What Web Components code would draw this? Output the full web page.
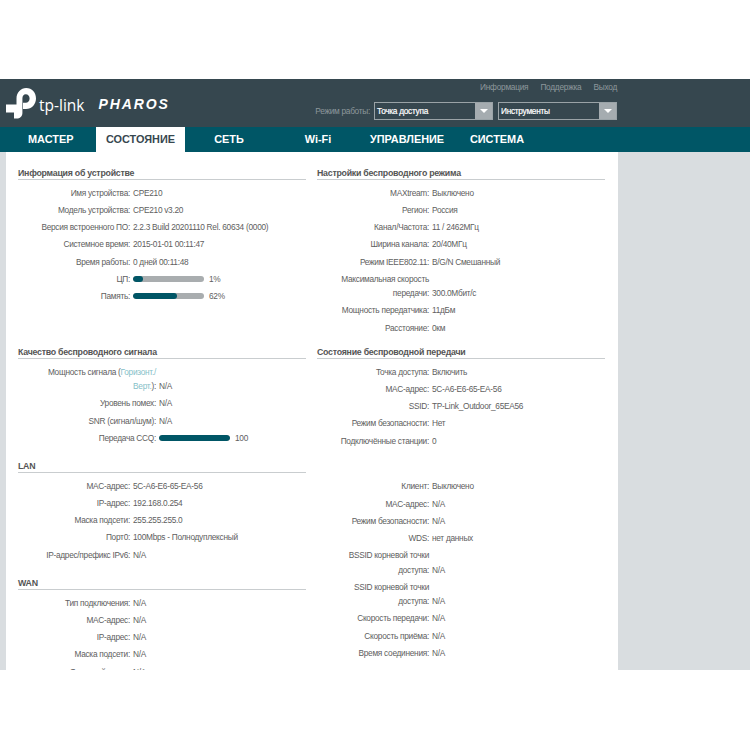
<!DOCTYPE html>
<html>
<head>
<meta charset="utf-8">
<title>CPE210</title>
<style>
html, body { margin: 0; padding: 0; background: #fff; }
body { font-family: "Liberation Sans", Arial, sans-serif; color: #555; padding-top: 79px; width: 750px; }
</style>
</head>
<body>
<router-page></router-page>

<template id="t-page">
  <style>
    :host { display: block; }
    .content { display: flex; height: 518px; overflow: hidden; background: #d9dde0; padding-left: 6px; }
    .panel { width: 612px; background: #fff; box-sizing: border-box; padding: 0 13px 0 12px; display: grid; grid-template-columns: 288px 288px; column-gap: 11px; align-content: start; height: 700px; }
    .col { display: flex; flex-direction: column; }
  </style>
  <top-header></top-header>
  <main-nav></main-nav>
  <div class="content">
    <div class="panel">
      <div class="col">
        <info-section heading="Информация об устройстве" style="height:179px">
          <info-row label="Имя устройства:">CPE210</info-row>
          <info-row label="Модель устройства:">CPE210 v3.20</info-row>
          <info-row label="Версия встроенного ПО:">2.2.3 Build 20201110 Rel. 60634 (0000)</info-row>
          <info-row label="Системное время:">2015-01-01 00:11:47</info-row>
          <info-row label="Время работы:">0 дней 00:11:48</info-row>
          <info-row label="ЦП:"><usage-bar value="14" text="1%"></usage-bar></info-row>
          <info-row label="Память:"><usage-bar value="62" text="62%"></usage-bar></info-row>
        </info-section>
        <info-section heading="Качество беспроводного сигнала" style="height:114px;--label-width:138px">
          <info-row label="Мощность сигнала (<a>Горизонт./</a><br><a>Верт.</a>):">N/A</info-row>
          <info-row label="Уровень помех:">N/A</info-row>
          <info-row label="SNR (сигнал/шум):">N/A</info-row>
          <info-row label="Передача CCQ:"><usage-bar value="100" text="100"></usage-bar></info-row>
        </info-section>
        <info-section heading="LAN" style="height:117px">
          <info-row label="MAC-адрес:">5C-A6-E6-65-EA-56</info-row>
          <info-row label="IP-адрес:">192.168.0.254</info-row>
          <info-row label="Маска подсети:">255.255.255.0</info-row>
          <info-row label="Порт0:">100Mbps - Полнодуплексный</info-row>
          <info-row label="IP-адрес/префикс IPv6:">N/A</info-row>
        </info-section>
        <info-section heading="WAN">
          <info-row label="Тип подключения:">N/A</info-row>
          <info-row label="MAC-адрес:">N/A</info-row>
          <info-row label="IP-адрес:">N/A</info-row>
          <info-row label="Маска подсети:">N/A</info-row>
          <info-row label="Основной шлюз:">N/A</info-row>
        </info-section>
      </div>
      <div class="col">
        <info-section heading="Настройки беспроводного режима" style="height:179px">
          <info-row label="MAXtream:">Выключено</info-row>
          <info-row label="Регион:">Россия</info-row>
          <info-row label="Канал/Частота:">11 / 2462МГц</info-row>
          <info-row label="Ширина канала:">20/40МГц</info-row>
          <info-row label="Режим IEEE802.11:">B/G/N Смешанный</info-row>
          <info-row label="Максимальная скорость<br>передачи:">300.0Мбит/с</info-row>
          <info-row label="Мощность передатчика:">11дБм</info-row>
          <info-row label="Расстояние:">0км</info-row>
        </info-section>
        <info-section heading="Состояние беспроводной передачи" style="height:114.5px">
          <info-row label="Точка доступа:">Включить</info-row>
          <info-row label="MAC-адрес:">5C-A6-E6-65-EA-56</info-row>
          <info-row label="SSID:">TP-Link_Outdoor_65EA56</info-row>
          <info-row label="Режим безопасности:">Нет</info-row>
          <info-row label="Подключённые станции:">0</info-row>
        </info-section>
        <info-section>
          <info-row label="Клиент:">Выключено</info-row>
          <info-row label="MAC-адрес:">N/A</info-row>
          <info-row label="Режим безопасности:">N/A</info-row>
          <info-row label="WDS:">нет данных</info-row>
          <info-row label="BSSID корневой точки<br>доступа:">N/A</info-row>
          <info-row label="SSID корневой точки<br>доступа:">N/A</info-row>
          <info-row label="Скорость передачи:">N/A</info-row>
          <info-row label="Скорость приёма:">N/A</info-row>
          <info-row label="Время соединения:">N/A</info-row>
        </info-section>
      </div>
    </div>
  </div>
</template>

<template id="t-header">
  <style>
    :host { display: flex; justify-content: space-between; height: 48px; background: #36474f; box-sizing: border-box; }
    .brand { display: flex; align-items: center; padding: 0 0 0 6px; }
    svg { margin-top: 1px; }
    .tp { color: #fff; font: 400 15.5px "Open Sans", sans-serif; margin: 3px 0 0 3px; }
    .pharos { color: #fff; font: italic 700 14px "Liberation Sans", sans-serif; letter-spacing: 1.9px; margin: 2px 0 0 14px; }
    .right { display: flex; flex-direction: column; align-items: flex-end; padding: 3px 133px 0 0; gap: 10px; }
    .links { display: flex; gap: 12px; font-size: 8.3px; letter-spacing: -0.25px; color: #8d979c; line-height: 10px; }
    .controls { display: flex; align-items: center; font-size: 8.3px; letter-spacing: -0.28px; color: #8d979c; }
    .label { margin-right: 4px; }
    drop-down + drop-down { margin-left: 5px; }
  </style>
  <div class="brand">
    <svg width="30" height="31" viewBox="0 0 30 31" aria-hidden="true">
      <path d="M0 16.5H10.5V10.5C10.5 4.5 15 0 20.2 0C26 0 30 4.6 30 10.5C30 16.2 25.8 21 20 21H17V14.8H19.8C22 14.8 23.6 12.9 23.6 10.5C23.6 8 22 6.2 19.8 6.2C17.6 6.2 16.4 8 16.4 10.5V25C16.4 28.5 14 30.5 10.5 30.5H8V24.5H0Z" fill="#fff"/>
    </svg>
    <span class="tp">tp-link</span>
    <span class="pharos">PHAROS</span>
  </div>
  <div class="right">
    <div class="links"><span>Информация</span><span>Поддержка</span><span>Выход</span></div>
    <div class="controls">
      <span class="label">Режим работы:</span>
      <drop-down style="width:119px">Точка доступа</drop-down>
      <drop-down style="width:119px">Инструменты</drop-down>
    </div>
  </div>
</template>

<template id="t-dropdown">
  <style>
    :host { display: flex; height: 18px; border: 1px solid #9aa3a7; box-sizing: border-box; }
    .value { flex: 1; font-size: 8.3px; letter-spacing: -0.28px; color: #fff; line-height: 16px; padding-left: 2px; white-space: nowrap; -webkit-text-stroke: 0.2px #fff; }
    .arrow { width: 17px; background: #a5acb0; display: flex; align-items: center; justify-content: center; }
    .arrow i { border: 4px solid transparent; border-top: 4px solid #fff; border-bottom-width: 0; }
  </style>
  <div class="value"><slot></slot></div>
  <div class="arrow"><i></i></div>
</template>

<template id="t-nav">
  <style>
    :host { display: flex; height: 25px; background: #005666; font-weight: 700; font-size: 10.9px; color: #fff; line-height: 25px; }
    span { display: block; text-align: center; }
    .on { background: #fff; color: #37474f; }
  </style>
  <span style="width:96px;box-sizing:border-box;text-align:left;padding-left:28px">МАСТЕР</span>
  <span class="on" style="width:89px">СОСТОЯНИЕ</span>
  <span style="width:88px">СЕТЬ</span>
  <span style="width:90px">Wi-Fi</span>
  <span style="width:88px">УПРАВЛЕНИЕ</span>
  <span style="width:92px">СИСТЕМА</span>
</template>

<template id="t-section">
  <style>
    :host { display: block; }
    h3 { margin: 0; height: 28px; box-sizing: border-box; padding-top: 15.5px; font-size: 8.8px; letter-spacing: -0.25px; line-height: 10px; font-weight: 700; color: #555; border-bottom: 1px solid #c9cdcf; }
    h3.blank { border-bottom: 0; }
    .rows { display: flex; flex-direction: column; padding-top: 5.8px; }
  </style>
  <h3></h3>
  <div class="rows"><slot></slot></div>
</template>

<template id="t-row">
  <style>
    :host { display: flex; font-size: 8.3px; letter-spacing: -0.28px; line-height: 14.4px; color: #606060; padding: 0 0 2.8px; }
    .k { width: var(--label-width, 112px); flex: none; text-align: right; margin-right: 3px; }
    .k a { color: #86c0c8; }
    .v { align-self: flex-end; white-space: nowrap; }
  </style>
  <div class="k"></div>
  <div class="v"><slot></slot></div>
</template>

<template id="t-bar">
  <style>
    :host { display: inline-flex; align-items: center; gap: 5px; }
    .track { display: block; width: 71px; height: 6px; border-radius: 3px; background: #a9adaf; overflow: hidden; }
    .fill { display: block; height: 100%; background: #005666; border-radius: 3px; }
  </style>
  <span class="track"><span class="fill"></span></span><span class="txt"></span>
</template>

<script>
function shadowFrom(el, id) {
    const root = el.attachShadow({mode: 'open'});
    root.appendChild(document.getElementById(id).content.cloneNode(true));
    return root;
}

class TopHeader extends HTMLElement {
    connectedCallback() { if (!this.shadowRoot) shadowFrom(this, 't-header'); }
}
class MainNav extends HTMLElement {
    connectedCallback() { if (!this.shadowRoot) shadowFrom(this, 't-nav'); }
}
class DropDown extends HTMLElement {
    connectedCallback() { if (!this.shadowRoot) shadowFrom(this, 't-dropdown'); }
}
class InfoSection extends HTMLElement {
    connectedCallback() {
        if (this.shadowRoot) return;
        const root = shadowFrom(this, 't-section');
        const h = root.querySelector('h3');
        const heading = this.getAttribute('heading');
        if (heading) h.textContent = heading; else h.classList.add('blank');
    }
}
class InfoRow extends HTMLElement {
    connectedCallback() {
        if (this.shadowRoot) return;
        const root = shadowFrom(this, 't-row');
        root.querySelector('.k').innerHTML = this.getAttribute('label');
    }
}
class UsageBar extends HTMLElement {
    connectedCallback() {
        if (this.shadowRoot) return;
        const root = shadowFrom(this, 't-bar');
        root.querySelector('.fill').style.width = this.getAttribute('value') + '%';
        root.querySelector('.txt').textContent = this.getAttribute('text');
    }
}
class RouterPage extends HTMLElement {
    connectedCallback() { if (!this.shadowRoot) shadowFrom(this, 't-page'); }
}

customElements.define('top-header', TopHeader);
customElements.define('main-nav', MainNav);
customElements.define('drop-down', DropDown);
customElements.define('info-section', InfoSection);
customElements.define('info-row', InfoRow);
customElements.define('usage-bar', UsageBar);
customElements.define('router-page', RouterPage);
</script>
</body>
</html>
